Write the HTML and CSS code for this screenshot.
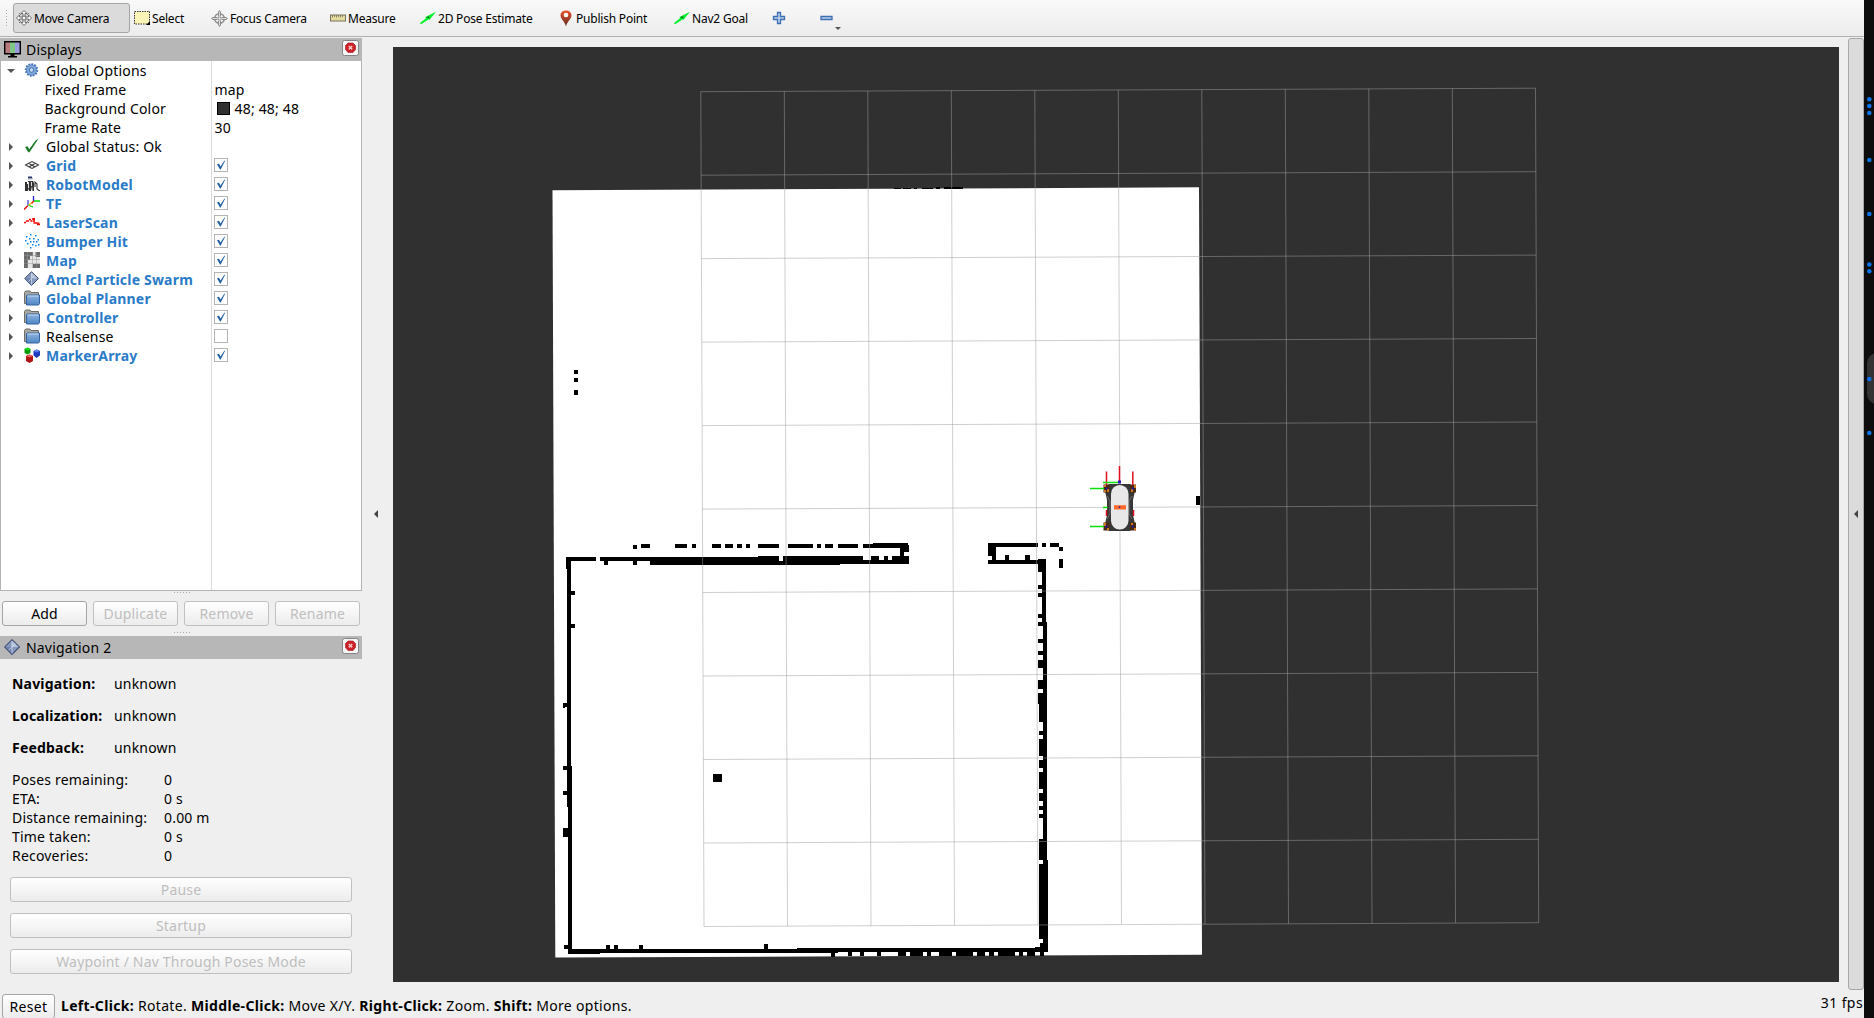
FILE: index.html
```html
<!DOCTYPE html>
<html lang="en">
<head>
<meta charset="utf-8">
<title>RViz</title>
<link rel="stylesheet" href="styles.css">
</head>
<body>
<svg class="defs" aria-hidden="true">
  <defs>
    <linearGradient id="pinG" x1="0" y1="0" x2="0" y2="1"><stop offset="0" stop-color="#f0522c"/><stop offset="1" stop-color="#5a2c1c"/></linearGradient>
    <linearGradient id="folG" x1="0" y1="0" x2="0" y2="1"><stop offset="0" stop-color="#8db4de"/><stop offset="1" stop-color="#4f86c4"/></linearGradient>
    <symbol id="arrow" viewBox="0 0 16 16"><path d="M.8 14.200 0 13 6 8.300l-.5-1.300L16 1.800 9.300 10 8.800 9.200 1.500 14z" fill="#00f02a"/><path d="M6 7.300l3-1 .5 2.500z" fill="#05701a"/></symbol>
    <symbol id="check" viewBox="0 0 14 14"><rect x=".5" y=".5" width="13" height="13" fill="#fff" stroke="#b4b4b4"/></symbol>
    <symbol id="checked" viewBox="0 0 14 14"><rect x=".5" y=".5" width="13" height="13" fill="#fff" stroke="#b4b4b4"/><path d="M3 6.300 5 5.800 6.500 8.500 10.500 2.500 11 3 6.700 11.500 6 11.500z" fill="#1f5fa0"/></symbol>
    <symbol id="diamond" viewBox="0 0 16 16"><path d="M7.500 .7 14.500 7.500 7.500 14.500.7 7.500z" fill="#8698bd" stroke="#3d4c76"/><path d="M7.500 1.500V7.500h6z" fill="#b4c2dc"/><path d="M1.500 7.500h6v6z" fill="#6f83ae"/><path d="M4.500 10.500 10.500 4.500M7.500 2v11.500" stroke="#cdd7e8" stroke-width=".8"/></symbol>
    <symbol id="folder" viewBox="0 0 16 16"><path d="M.5 13.500V2.500L1.500 1H6l1 1.500h7.500V13z" fill="#a9a9a4" stroke="#6c6c68"/><path d="M3 5h12.500v8.500l-1 1.500H2.500V6z" fill="url(#folG)" stroke="#32639f"/><path d="M3.500 6h11" stroke="#c4daf0"/></symbol>
    <symbol id="close" viewBox="0 0 17 16"><rect x=".5" y=".5" width="16" height="15" rx="2" fill="#f6f6f6" stroke="#858585"/><path d="M6 3h5l2.500 2.500v4L11 12.500H6L3.500 9.500v-4z" fill="#cc2128" stroke="#a6141b" stroke-width=".6"/><path d="M6.800 6l3.400 3.400M10.200 6 6.800 9.400" stroke="#f4c4c4" stroke-width="1.500"/></symbol>
  </defs>
</svg>
<div class="screen">
<div class="window">
  <nav class="toolbar">
    <div class="tool active"><svg width="16" height="16" viewBox="0 0 16 16"><g fill="#fff" stroke="#6b6b6b"><path d="M8 .5 11 3.500H9V7h3.500V5l3 3-3 3V9H9v3.500h2L8 15.500 5 12.500h2V9H3.500v2l-3-3 3-3v2H7V3.500H5z" /><circle cx="8" cy="8" r="2"/></g><path d="M3 3l2 2M13 3l-2 2M3 13l2-2M13 13l-2-2" stroke="#777"/></svg><span>Move Camera</span></div>
    <div class="tool"><svg width="16" height="14" viewBox="0 0 16 14"><rect x=".5" y=".5" width="15" height="12.500" fill="#fcf5b8" stroke="#333" stroke-dasharray="1.500 1"/><path d="M16 10v4h-4z"/></svg><span>Select</span></div>
    <div class="tool"><svg width="17" height="17" viewBox="0 0 17 17" fill="none" stroke="#8b8b8b"><circle cx="8.500" cy="8.500" r="4.800" stroke-width="1.500"/><circle cx="8.500" cy="8.500" r="1.500"/><path d="M7.500 6.500V2L8.500.5l1 1.500v4.500M7.500 10.500V15l1 1.500 1-1.500v-4.500M6.500 7.500H2L.5 8.500 2 9.500h4.500M10.500 7.500H15l1.500 1-1.500 1h-4.500" fill="#ddd"/></svg><span>Focus Camera</span></div>
    <div class="tool"><svg width="16" height="8" viewBox="0 0 16 8"><rect x=".5" y="1" width="15" height="6" fill="#e3dba0" stroke="#77735c"/><path d="M2.500 1v2.500M4.500 1v2M6.500 1v2.500M8.500 1v2M10.500 1v2.500M12.500 1v2" stroke="#77735c" stroke-width=".8"/></svg><span>Measure</span></div>
    <div class="tool"><svg width="16" height="16"><use href="#arrow"/></svg><span>2D Pose Estimate</span></div>
    <div class="tool pin"><svg width="12" height="17" viewBox="0 0 12 17"><path d="M6 .5C2.500.5.5 2.700.5 5.500.5 9 5 11.500 6 16.500 7 11.500 11.500 9 11.500 5.500 11.500 2.700 9.500.5 6 .5z" fill="url(#pinG)"/><circle cx="6" cy="5" r="2.300" fill="#fff"/></svg><span>Publish Point</span></div>
    <div class="tool"><svg width="16" height="16"><use href="#arrow"/></svg><span>Nav2 Goal</span></div>
    <div class="tool icon"><svg width="14" height="14" viewBox="0 0 14 14"><path d="M5.500 1.500h3v4h4v3h-4v4h-3v-4h-4v-3h4z" fill="#b7cfe9" stroke="#3d6fb2" stroke-width="1.300"/></svg></div>
    <div class="tool icon"><svg width="22" height="24" viewBox="0 0 22 24"><path d="M1 10.500h11v3H1z" fill="#b7cfe9" stroke="#3d6fb2" stroke-width="1.300"/><path d="M15 21h6l-3 3z" fill="#555"/></svg></div>
  </nav>
  <main class="work">
    <aside class="dock">
      <header class="title"><svg width="17" height="17" viewBox="0 0 17 17"><path d="M1 1h15v11.500H1z" fill="#b87a7e"/><path d="M6 1h5v11.500H6z" fill="#80c786"/><path d="M11 1h5v11.500h-5z" fill="#9a9ade"/><path d="M.7.700h15.600v12H.700z" fill="none" stroke="#000" stroke-width="1.400"/><path d="M6.500 13h4v2h-4zM4 15h9v1.500H4z"/></svg><h2>Displays</h2><svg class="x" width="17" height="16"><use href="#close"/></svg></header>
      <ul class="tree">
        <li><i class="tw open"></i><svg width="16" height="14" viewBox="0 0 16 14"><circle cx="7.500" cy="7" r="5.700" fill="#86abd9" stroke="#3e6fb3" stroke-width="2" stroke-dasharray="1.700 1.200"/><circle cx="7.500" cy="7" r="4.800" fill="#86abd9" stroke="#5c8bc8" stroke-width=".7"/><circle cx="7.500" cy="7" r="2.300" fill="#c4d8ef" stroke="#3e6fb3"/></svg><span class="name">Global Options</span></li>
        <li class="prop"><span class="name">Fixed Frame</span><span class="val">map</span></li>
        <li class="prop"><span class="name">Background Color</span><span class="val"><i class="swatch"></i>48; 48; 48</span></li>
        <li class="prop"><span class="name">Frame Rate</span><span class="val">30</span></li>
        <li><i class="tw"></i><svg width="16" height="16" viewBox="0 0 16 16"><path d="M1 9 3.500 8.200l1.700 3L11.500 2.500 14.500 .8 5.500 14.300H4.300z" fill="#1d7a26"/></svg><span class="name">Global Status: Ok</span></li>
        <li class="on"><i class="tw"></i><svg width="16" height="16" viewBox="0 0 16 16" fill="none" stroke="#3a3a3a" stroke-width="1.100"><path d="M1.500 8 8 4.500l6.500 3.500L8 11.500zM4.700 6.200l6.500 3.700M11.300 6.200l-6.500 3.700"/></svg><span class="name">Grid</span><span class="val"><svg width="14" height="14"><use href="#checked"/></svg></span></li>
        <li class="on"><i class="tw"></i><svg width="16" height="16" viewBox="0 0 16 16"><path d="M4 1.500h4.500v2H4z" fill="#9aa5b8"/><path d="M4 .5h4v1.500H4z" fill="#26336a"/><path d="M1 6h2v2h1V5h5l1 2v8H8.500L8 10 7 15H5L4 12v3H1z" fill="#333"/><path d="M4.500 6v6M7.500 6v4" stroke="#ddd"/><path d="M11 11V6l2 2v5l2 1.500h1" fill="none" stroke="#333" stroke-width="1.100"/></svg><span class="name">RobotModel</span><span class="val"><svg width="14" height="14"><use href="#checked"/></svg></span></li>
        <li class="on"><i class="tw"></i><svg width="16" height="16" viewBox="0 0 16 16" fill="none" stroke-width="1.300"><path d="M0 14.500l4-4" stroke="#e00"/><path d="M4 10.500V5" stroke="#44d"/><path d="M4 10 9 12M10 6h6" stroke="#0d0"/><path d="M9.500 6V1" stroke="#22c"/><path d="M4.500 10.500 9.500 6" stroke="#e8c020"/><path d="M7.500 8.500 10 6" stroke="#d22"/></svg><span class="name">TF</span><span class="val"><svg width="14" height="14"><use href="#checked"/></svg></span></li>
        <li class="on"><i class="tw"></i><svg width="16" height="16" viewBox="0 0 16 16"><path d="M0 8.500h2M2 7h3M5 5.500h2M6.500 7h2M8 5h3M10 4v4M9.500 9h4M13 10.500h3M14.500 8.500v2" fill="none" stroke="#f00000" stroke-width="1.700"/></svg><span class="name">LaserScan</span><span class="val"><svg width="14" height="14"><use href="#checked"/></svg></span></li>
        <li class="on"><i class="tw"></i><svg width="16" height="16" viewBox="0 0 16 16"><path d="M6 1h1.500v1.500H6zM11 2h1.500v1.500H11zM2 3h1.500v1.500H2zM5 5h1.500v1.500H5zM9 5h1.500v1.500H9zM13.500 6H15v1.500h-1.500zM1 7h1.500v1.500H1zM6 8h1.500v1.500H6zM9 8h1.500v1.500H9zM12 8h1.500v1.500H12zM3 10h1.500v1.500H3zM8 11h1.500v1.500H8zM11 12h1.500v1.500H11zM14 11h1.500v1.500H14zM6 14h1.500v1.500H6z" fill="#0a84f0"/></svg><span class="name">Bumper Hit</span><span class="val"><svg width="14" height="14"><use href="#checked"/></svg></span></li>
        <li class="on"><i class="tw"></i><svg width="16" height="16" viewBox="0 0 16 16"><path d="M0 0h16v16H0z" fill="#e6e6e6"/><path d="M0 0h9v4H6v4H4v8H0zM11.500 0H16v5h-4.500zM9 12h7v4H9z" fill="#6b6b6b"/><path d="M0 3.500h16M0 7.500h16M0 11.500h16M3.500 0v16M8.500 0v16M12.500 0v16" stroke="#999" stroke-width=".5"/></svg><span class="name">Map</span><span class="val"><svg width="14" height="14"><use href="#checked"/></svg></span></li>
        <li class="on"><i class="tw"></i><svg width="16" height="16"><use href="#diamond"/></svg><span class="name">Amcl Particle Swarm</span><span class="val"><svg width="14" height="14"><use href="#checked"/></svg></span></li>
        <li class="on"><i class="tw"></i><svg width="16" height="16"><use href="#folder"/></svg><span class="name">Global Planner</span><span class="val"><svg width="14" height="14"><use href="#checked"/></svg></span></li>
        <li class="on"><i class="tw"></i><svg width="16" height="16"><use href="#folder"/></svg><span class="name">Controller</span><span class="val"><svg width="14" height="14"><use href="#checked"/></svg></span></li>
        <li><i class="tw"></i><svg width="16" height="16"><use href="#folder"/></svg><span class="name">Realsense</span><span class="val"><svg width="14" height="14"><use href="#check"/></svg></span></li>
        <li class="on"><i class="tw"></i><svg width="16" height="16" viewBox="0 0 16 16"><path d="M3.500.5 6.500 2v4l-3 1.500L.5 6V2z" fill="#0a9a0a"/><path d="M3.500.5 6.500 2l-3 1.500L.5 2z" fill="#19e019"/><path d="M12.500 2.500 16 4v4.500L12.500 11 9.500 8.500V4z" fill="#1f3cc0"/><path d="M12.500 2.500 16 4l-3.500 1.500-3-1.500z" fill="#5a7cff"/><path d="M5.500 7.500 9 9v5l-3.500 2L2 14V9z" fill="#b01414"/><path d="M5.500 7.500 9 9l-3.500 1.500L2 9z" fill="#ee5a5a"/></svg><span class="name">MarkerArray</span><span class="val"><svg width="14" height="14"><use href="#checked"/></svg></span></li>
      </ul>
      <div class="grip"></div>
      <div class="actions"><button>Add</button><button disabled>Duplicate</button><button disabled>Remove</button><button disabled>Rename</button></div>
      <div class="grip"></div>
      <header class="title"><svg width="17" height="17"><use href="#diamond"/></svg><h2>Navigation 2</h2><svg class="x" width="17" height="16"><use href="#close"/></svg></header>
      <dl class="status"><dt>Navigation:</dt><dd>unknown</dd><dt>Localization:</dt><dd>unknown</dd><dt>Feedback:</dt><dd>unknown</dd></dl>
      <dl class="stats"><dt>Poses remaining:</dt><dd>0</dd><dt>ETA:</dt><dd>0 s</dd><dt>Distance remaining:</dt><dd>0.00 m</dd><dt>Time taken:</dt><dd>0 s</dd><dt>Recoveries:</dt><dd>0</dd></dl>
      <div class="modes"><button disabled>Pause</button><button disabled>Startup</button><button disabled>Waypoint / Nav Through Poses Mode</button></div>
    </aside>
    <div class="fold"><i></i></div>
    <svg class="view" width="1446" height="935" viewBox="393 47 1446 935">
      <path d="M393 47h1446v935H393z" fill="#303030"/>
      <path d="M552.500 190.300 1199 187.300 1202 954.800 555.300 957.500z" fill="#fff"/>
      <g class="cells">
        <path d="M894 188h7v1h-7zM903 188h8v1h-8zM914 188h3v1h-3zM922 188h11v1h-11zM936 187h4v2h-4zM944 187h19v2h-19z"/>
        <path d="M574 370h4v4h-4zM574 378h4v4h-4zM574 390h4v5h-4zM1196 496h4v9h-4zM713 774h9v8h-9z"/>
        <path d="M633 545h4v4h-4zM641 544h9v4h-9zM675 544h12v4h-12zM692 544h4v4h-4zM712 544h9v4h-9zM725 544h8v4h-8zM737 544h5v4h-5zM746 544h4v4h-4zM758 544h21v4h-21zM788 544h25v4h-25zM817 544h4v4h-4zM825 544h8v4h-8zM838 544h20v4h-20zM863 544h10v4h-10zM873 543h35v5h-35zM900 548h4v8h-4zM904 545h5v7h-5z"/>
        <path d="M566 557h30v4h-30zM600 557h50v4h-50zM650 557h108v8h-108zM758 556h21v9h-21zM779 561h4v4h-4zM783 556h57v9h-57zM840 556h23v8h-23zM863 560h46v4h-46zM871 556h8v4h-8zM884 556h4v4h-4zM892 556h17v4h-17zM604 561h4v4h-4zM633 561h4v4h-4z"/>
        <path d="M566 557h5v12h-5zM567 569h4v197h-4zM567 766h5v41h-5zM568 807h4v146h-4zM571 591h4v4h-4zM571 624h4v4h-4zM563 703h4v4h-4zM563 707h2v1h-2zM563 766h4v4h-4zM563 791h4v4h-4zM563 828h5v9h-5zM564 945h4v4h-4z"/>
        <path d="M568 949h32v5h-32zM600 949h238v4h-238zM797 948h251v4h-251zM606 945h4v4h-4zM614 945h4v4h-4zM639 945h4v4h-4zM764 944h4v5h-4zM1035 947h13v2h-13zM1040 943h8v5h-8z"/>
        <path d="M831 952h4v5h-4zM848 952h4v4h-4zM860 952h4v4h-4zM877 952h4v4h-4zM898 952h8v4h-8zM910 952h13v4h-13zM927 952h4v4h-4zM939 952h13v4h-13zM956 952h17v4h-17zM977 952h8v4h-8zM989 952h5v4h-5zM998 952h17v4h-17zM1019 952h4v4h-4zM1027 952h8v4h-8zM1040 952h4v4h-4z"/>
        <path d="M988 543h50v4h-50zM1042 543h4v4h-4zM1050 543h9v4h-9zM1059 547h4v4h-4zM1059 559h4v9h-4zM988 547h8v9h-8zM992 556h4v4h-4zM988 560h54v4h-54zM1005 555h4v5h-4zM1025 555h5v5h-5z"/>
        <path d="M1042 559h4v63h-4zM1043 622h4v238h-4zM1043 860h5v92h-5zM1038 559h4v13h-4zM1038 585h4v4h-4zM1038 593h4v4h-4zM1038 614h4v4h-4zM1038 622h5v4h-5zM1038 639h5v4h-5zM1038 651h5v4h-5zM1038 660h5v8h-5zM1038 680h5v9h-5zM1038 693h5v11h-5zM1039 704h4v18h-4zM1039 731h4v4h-4zM1039 739h4v17h-4zM1039 760h4v8h-4zM1039 772h4v17h-4zM1039 793h4v8h-4zM1039 806h4v4h-4zM1039 814h4v4h-4zM1039 839h4v21h-4zM1039 864h4v75h-4zM1044 939h4v4h-4z"/>
      </g>
      <path class="grid" d="M700.800 91.700 704 926.500M784.300 91.300l3.200 834.800M867.800 91l3.200 834.700M951.300 90.600l3.200 834.700M1034.800 90.300l3.200 834.600M1118.300 90l3.200 834.500M1201.800 89.600l3.200 834.500M1285.300 89.300l3.200 834.400M1368.800 88.900l3.200 834.400M1452.300 88.600l3.200 834.300M1535.500 88.200l3.200 834.500M700.800 91.700l834.700-3.500M701.100 175.200l834.700-3.500M701.400 258.600l834.800-3.500M701.800 342.100l834.700-3.600M702.100 425.600l834.700-3.600M702.400 509.100l834.700-3.600M702.700 592.500l834.700-3.600M703 676l834.700-3.600M703.400 759.500l834.700-3.700M703.700 843l834.700-3.700M704 926.500l834.700-3.800"/>
      <g>
        <path d="M1109 484h21l5 7-2 9v15l2 9-5 7h-21l-4-7 2-9v-15l-2-9z" fill="#383838"/>
        <path d="M1107 496l3 5v13l-3 5M1132 496l-3 5v13l3 5" fill="none" stroke="#777" stroke-width=".8"/>
        <rect x="1111" y="485" width="17.500" height="44.500" rx="8.700" fill="#e8e8e8"/>
        <path d="M1114 505.200h12v4.300h-12z" fill="#ff6a2a"/>
        <path d="M1103.500 484.500h6v8h-6zM1130 484.500h6v8h-6zM1103.500 522.500h6v8h-6zM1130 522.500h6v8h-6z" fill="#4a2a0e"/>
        <path d="M1104 485h2v2h-2zM1107 489h2v3h-2zM1104 490h2v2h-2zM1131 489h2v3h-2zM1134 485h2v3h-2zM1104 523h2v3h-2zM1107 528h2v2h-2zM1131 523h2v2h-2zM1134 528h2v2h-2z" fill="#d0761c"/>
        <path d="M1106.500 471.500V485M1119.500 466v15M1132.800 471.500V485M1106.500 510v6M1133.500 510v6" stroke="#e01020" stroke-width="1.500"/>
        <path d="M1090 488.500h14M1103 482.500h15M1103 507.500h4.500M1090 526.500h14" stroke="#0be00b" stroke-width="1.400"/>
        <path d="M1118 480.500h3v3h-3zM1105.500 487.500h2v2h-2zM1131.800 487.500h2v2h-2zM1105.500 525.500h2v2h-2zM1131.800 525.500h2v2h-2zM1118.800 506.500h1.500v1.500h-1.500z" fill="#2014b4"/>
      </g>
    </svg>
    <div class="rail"><i></i></div>
  </main>
  <footer class="bar"><button>Reset</button><p><b>Left-Click:</b> Rotate. <b>Middle-Click:</b> Move X/Y. <b>Right-Click:</b> Zoom. <b>Shift:</b> More options.</p><span class="fps">31 fps</span></footer>
</div>
<svg class="edge" width="10" height="1018" viewBox="0 0 10 1018"><rect x="3" y="353" width="26" height="51" rx="10" fill="#333"/><g fill="#0b72e7"><circle cx="5.300" cy="99.300" r="2.300"/><circle cx="5.300" cy="106" r="2.300"/><circle cx="5.300" cy="113" r="2.300"/><circle cx="5.300" cy="160" r="2.300"/><circle cx="5.300" cy="214" r="2.300"/><circle cx="5.300" cy="264.500" r="2.300"/><circle cx="5.300" cy="271.300" r="2.300"/><circle cx="5.300" cy="379" r="2.300"/><circle cx="5.300" cy="433" r="2.300"/></g></svg>
</div>
</body>
</html>
```
FILE: styles.css
```css
* { box-sizing: border-box; }
body { margin: 0; background: #0d0d0d; font: 14px/19px "Noto Sans", "Open Sans", sans-serif; letter-spacing: .19px; color: #000; overflow: hidden; }
h2, p, ul, dl, dd { margin: 0; padding: 0; }
svg { display: block; flex: none; }
.defs { position: absolute; width: 0; height: 0; }
.screen { display: flex; width: 1874px; height: 1018px; }
.window { display: flex; flex-direction: column; width: 1864px; background: #efefef; white-space: nowrap; }
.edge { background: #0d0d0d; }

.toolbar { display: grid; grid-template-columns: 118px 77px 119px 90px 139px 115px 98px 48px 48px; height: 37px; padding: 3px 0 3px 13px; background: linear-gradient(#f9f9f9, #ececec); border-bottom: 1px solid #b0b0b0; position: relative; }
.toolbar::before { content: ""; position: absolute; left: 5px; top: 9px; width: 4px; height: 18px; background: radial-gradient(circle, #a8a8a8 .7px, transparent 1px) 0 0 / 3px 3px; }
.tool { display: flex; align-items: center; gap: 2px; padding-left: 3px; font-size: 12px; letter-spacing: -.21px; }
.tool.pin { padding-left: 4px; gap: 4px; }
.tool.active { width: 117px; border: 1px solid #a4a4a4; border-radius: 3px; background: #dbdbdb; padding-left: 2px; }

.work { display: flex; height: 953px; padding-top: 1px; }
.dock { width: 362px; display: flex; flex-direction: column; }
.title { display: flex; align-items: center; height: 23px; padding: 0 3px 0 4px; background: #b7b7b7; flex: none; }
.title h2 { font-size: 14px; font-weight: 400; margin-left: 5px; flex: 1; }
.title .x { margin-bottom: 3px; }
.title + .status { margin-top: 9px; }
.tree { list-style: none; height: 530px; border: 1px solid #b4b4b4; border-top: 0; background: linear-gradient(#dcdcdc, #dcdcdc) 210px 0 / 1px 100% no-repeat #fff; flex: none; }
.tree li { display: flex; align-items: center; height: 19px; padding-left: 8px; }
.tw { width: 15px; flex: none; }
.tw::before { content: ""; display: block; width: 0; border: 4px solid transparent; border-left-color: #555; border-right: 0; }
.tw.open::before { margin-left: -2px; border: 4px solid transparent; border-top-color: #555; border-bottom: 0; }
.tree li > svg { margin: 0 6px 2px 0; width: 16px; }
.name { width: 167.5px; }
.prop .name { width: 205.5px; padding-left: 35.500px; }
.on .name { color: #2a7bc8; font-weight: 700; }
.val { display: flex; align-items: center; }
.val svg { margin-bottom: 1px; }
.swatch { width: 13px; height: 13px; margin: 0 5px 0 2px; background: #303030; border: 1px solid #000; }
.grip { height: 3px; width: 17px; margin: 0 auto; background: radial-gradient(circle, #aaa .7px, transparent 1px) 0 0 / 3px 3px; flex: none; }
.tree + .grip { margin-bottom: 7px; }
.actions + .grip { margin: 5px auto 2px; }
.actions { display: grid; grid-template-columns: repeat(4, 85px); gap: 6px; padding-left: 2px; }
button { font: inherit; letter-spacing: inherit; color: #000; height: 25px; padding: 0; border: 1px solid #a5a5a5; border-radius: 3px; background: linear-gradient(#fff, #ececec); }
button:disabled { color: #bebebe; border-color: #c0c0c0; }
.status { display: grid; grid-template-columns: 102px 1fr; grid-auto-rows: 32px; line-height: 32px; padding-left: 12px; }
.status dt { font-weight: 700; }
.stats { display: grid; grid-template-columns: 152px 1fr; grid-auto-rows: 19px; padding-left: 12px; margin-top: 6px; }
.modes { display: grid; gap: 11px; padding: 12px 10px 0; }
.fold, .rail { display: flex; align-items: center; }
.fold { width: 31px; padding: 0 0 0 12px; }
.fold i, .rail i { border: 4px solid transparent; border-right-color: #444; border-left: 0; }
.view { margin-top: 9px; }
.grid { fill: none; stroke: #a0a0a4; stroke-opacity: .5; }
.cells { shape-rendering: crispEdges; }
.rail { width: 16px; margin-left: 9px; padding-left: 5px; border: 1px solid #a8a8a8; border-radius: 3px; background: #dbdbdb; }

.bar { display: flex; height: 28px; padding: 4px 1px 0 2px; }
.bar button { width: 53px; letter-spacing: .3px; }
.bar p { margin: 2px 0 0 6px; letter-spacing: .33px; }
.fps { margin: -1px 0 0 auto; letter-spacing: .4px; }
```
